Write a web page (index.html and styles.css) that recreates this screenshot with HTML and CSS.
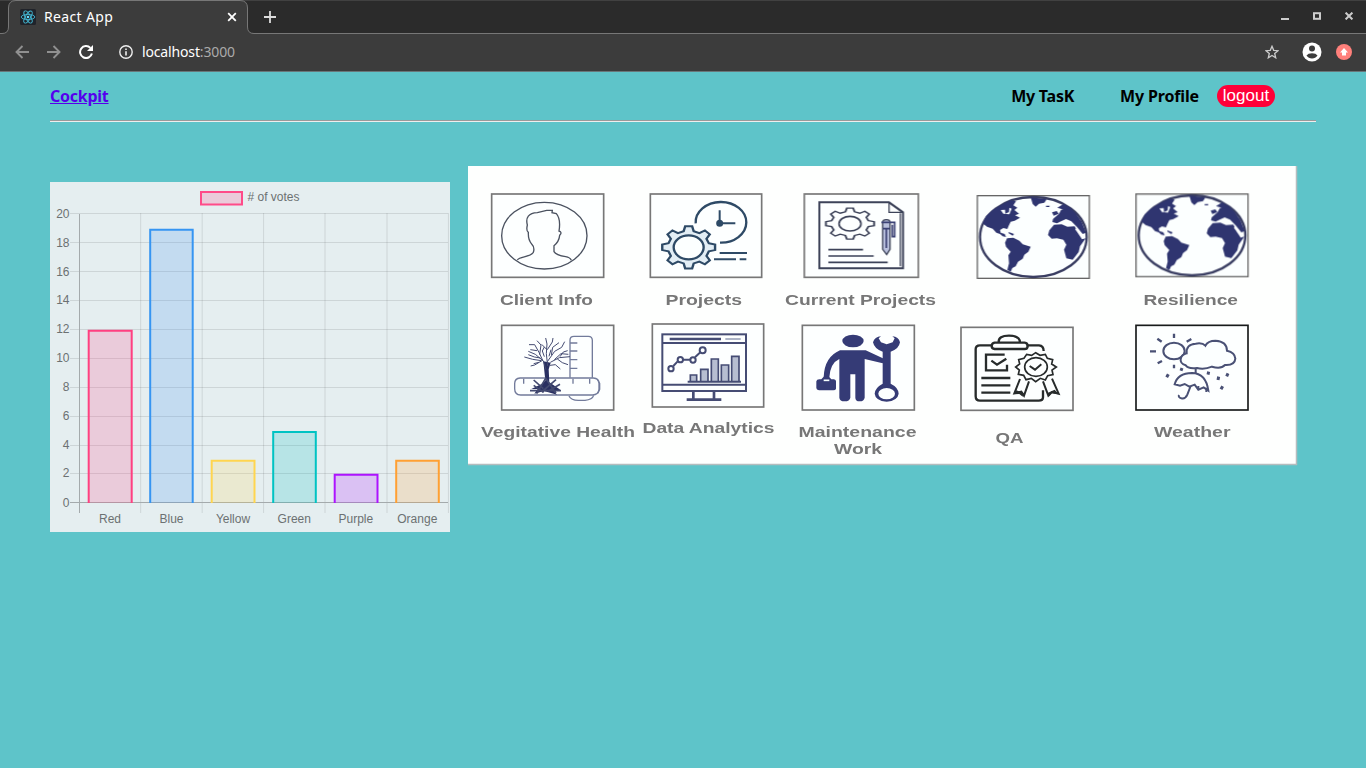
FILE: index.html
```html
<!DOCTYPE html>
<html lang="en">
<head>
<meta charset="utf-8">
<title>React App</title>
<link rel="stylesheet" href="styles.css">
</head>
<body>
<header class="browser">
  <div class="tabstrip">
    <svg class="tab-shape" width="268" height="34" viewBox="0 0 268 34"><path d="M0 33.500H2Q8.500 33.500 8.500 27V8Q8.500 .5 16 .5H240Q247.500 .5 247.500 8V27Q247.500 33.500 254 33.500H268V34H0Z" fill="#3c3c3c"/><path d="M0 33.500H2Q8.500 33.500 8.500 27V8Q8.500 .5 16 .5H240Q247.500 .5 247.500 8V27Q247.500 33.500 254 33.500H268" fill="none" stroke="#777"/></svg>
    <div class="tab">
      <svg class="favicon" width="16" height="16" viewBox="0 0 16 16"><rect width="16" height="16" rx="1.500" fill="#20232a"/><g fill="none" stroke="#43b7d3" stroke-width=".9"><ellipse cx="8" cy="8" rx="6.800" ry="2.600"/><ellipse cx="8" cy="8" rx="6.800" ry="2.600" transform="rotate(60 8 8)"/><ellipse cx="8" cy="8" rx="6.800" ry="2.600" transform="rotate(120 8 8)"/></g><circle cx="8" cy="8" r="1.300" fill="#61dafb"/></svg>
      <span class="tab-title">React App</span>
      <svg class="tab-close" width="10" height="10" viewBox="0 0 10 10"><path d="M1.200 1.200L8.800 8.800M8.800 1.200L1.200 8.800" stroke="#fff" stroke-width="1.800"/></svg>
    </div>
    <svg class="new-tab" width="12" height="12" viewBox="0 0 12 12"><path d="M6 0V12M0 6H12" stroke="#ddd" stroke-width="1.800"/></svg>
    <div class="window-buttons">
      <svg width="8" height="8" viewBox="0 0 8 8"><path d="M0 7H8" stroke="#ccc" stroke-width="2"/></svg>
      <svg width="8" height="8" viewBox="0 0 8 8"><rect x="1" y="1.200" width="6" height="5.600" fill="none" stroke="#ccc" stroke-width="2"/></svg>
      <svg width="8" height="8" viewBox="0 0 8 8"><path d="M.6 .6L7.400 7.400M7.400 .6L.6 7.400" stroke="#ccc" stroke-width="2"/></svg>
    </div>
  </div>
  <div class="toolbar">
    <svg width="14" height="14" viewBox="0 0 14 14"><path d="M14 7H1.500M7.500 1L1.500 7L7.500 13" fill="none" stroke="#909090" stroke-width="1.900"/></svg>
    <svg width="14" height="14" viewBox="0 0 14 14"><path d="M0 7H12.500M6.500 1L12.500 7L6.500 13" fill="none" stroke="#909090" stroke-width="1.900"/></svg>
    <svg width="14" height="14" viewBox="0 0 14 14"><path d="M12.900 8.600A6 6 0 1 1 11.400 2.900" fill="none" stroke="#fff" stroke-width="2"/><path d="M14 0V6H8Z" fill="#fff"/></svg>
    <svg class="info" width="14" height="14" viewBox="0 0 14 14"><circle cx="7" cy="7" r="6.200" fill="none" stroke="#eee" stroke-width="1.400"/><path d="M7 6.200V10.500M7 3.500V5" stroke="#eee" stroke-width="1.600"/></svg>
    <span class="url">localhost<span class="port">:3000</span></span>
    <svg class="star" width="14" height="14" viewBox="0 0 14 14"><path d="M7 1.300L8.700 5.300L13 5.700L9.700 8.500L10.700 12.800L7 10.500L3.300 12.800L4.300 8.500L1 5.700L5.300 5.300Z" fill="none" stroke="#ccc" stroke-width="1.300"/></svg>
    <svg class="avatar" width="20" height="20" viewBox="0 0 20 20"><circle cx="10" cy="10" r="9.500" fill="#fff"/><circle cx="10" cy="6.500" r="3" fill="#3c3c3c"/><path d="M4.500 13.500Q6 11.200 10 11.200T15.500 13.500Q13.500 16.500 10 16.500T4.500 13.500Z" fill="#3c3c3c"/></svg>
    <svg class="update" width="16" height="16" viewBox="0 0 16 16"><circle cx="8" cy="8" r="8" fill="#ff807b"/><path d="M8 4L12 8.500H10V11.500H6V8.500H4Z" fill="#fff"/></svg>
  </div>
</header>

<nav class="nav">
  <a class="brand" href="#">Cockpit</a>
  <span class="nav-task">My TasK</span>
  <span class="nav-profile">My Profile</span>
  <button class="logout">logout</button>
</nav>

<main class="content">
  <svg class="chart" width="400" height="350" viewBox="0 0 400 350">
    <rect x="151" y="10" width="41" height="12.500" fill="#ff4081" fill-opacity=".2" stroke="#ff4b89" stroke-width="2"/>
    <text x="197.500" y="19"># of votes</text>
    <g class="grid">
      <path d="M20 31.500H398M20 60.500H398M20 89.500H398M20 118.500H398M20 147.500H398M20 176.500H398M20 205.500H398M20 234.500H398M20 263.500H398M20 291.500H398"/>
      <path d="M90.700 31V331M152.200 31V331M213.600 31V331M275 31V331M337 31V331M398.400 31V331"/>
    </g>
    <path class="axis" d="M29.500 32V331M20 320.500H398"/>
    <g class="bars">
      <path d="M38.700 321V148.700H81.700V321" fill="#ff4081" stroke="#ff4081"/>
      <path d="M100.200 321V47.700H142.700V321" fill="#3b8ff2" stroke="#3695f2"/>
      <path d="M161.700 321V278.700H204.500V321" fill="#ffd54f" stroke="#ffd54f"/>
      <path d="M223.200 321V249.900H265.800V321" fill="#00bfbf" stroke="#00c3c3"/>
      <path d="M284.700 321V292.700H327.500V321" fill="#b010ff" stroke="#ad13ff"/>
      <path d="M346.200 321V278.700H388.800V321" fill="#ffa033" stroke="#ffa033"/>
    </g>
    <g text-anchor="end"><text x="19.500" y="36">20</text><text x="19.500" y="65">18</text><text x="19.500" y="94">16</text><text x="19.500" y="122">14</text><text x="19.500" y="151">12</text><text x="19.500" y="180">10</text><text x="19.500" y="209">8</text><text x="19.500" y="238">6</text><text x="19.500" y="267">4</text><text x="19.500" y="295">2</text><text x="19.500" y="325">0</text></g>
    <g text-anchor="middle"><text x="60" y="341">Red</text><text x="121.500" y="341">Blue</text><text x="183" y="341">Yellow</text><text x="244.300" y="341">Green</text><text x="305.800" y="341">Purple</text><text x="367.300" y="341">Orange</text></g>
  </svg>

  <svg class="modules" width="830" height="300" viewBox="0 0 830 300">
    <defs>
      <path id="gear" d="M75.700 -18.900L99 -13V13L75.700 18.900L66.900 40.200L79.200 60.800L60.800 79.200L40.200 66.900L18.900 75.700L13 99H-13L-18.900 75.700L-40.200 66.900L-60.800 79.200L-79.200 60.800L-66.900 40.200L-75.700 18.900L-99 13V-13L-75.700 -18.900L-66.900 -40.200L-79.200 -60.800L-60.800 -79.200L-40.200 -66.900L-18.900 -75.700L-13 -99H13L18.900 -75.700L40.200 -66.900L60.800 -79.200L79.200 -60.800L66.900 -40.200Z"/>
      <g id="globe">
        <rect x="622" y="107" width="336" height="248" fill="#fcffff" stroke="#666" stroke-width="4"/>
        <ellipse cx="790" cy="231" rx="160" ry="120" fill="none" stroke="#3a3e62" stroke-width="7"/>
        <g fill="#2f3570">
          <path d="M638 190L648 168L668 150L692 136L722 121L738 124L730 136L742 143L733 150L747 161L735 166L750 173L734 182L722 185L716 197L712 207L700 204L690 210L692 218L704 222L708 231L698 229L690 222L679 218L668 206L651 200Z"/>
          <path d="M711 235L730 233L748 242L758 253L782 260L775 275L763 284L758 296L744 305L737 319L727 324L722 335L712 329L717 310L715 286L722 275L708 260L705 248Z"/>
          <path d="M782 112L830 118L823 128L807 131L797 140L788 132Z"/>
          <path d="M838 211L852 194L875 193L892 200L914 199L924 220L936 238L947 235L930 259L926 276L908 299L889 295L882 269L889 254L880 239L861 235L845 236L834 225Z"/>
          <path d="M849 177L867 161L873 150L887 144L899 142L918 161L935 185L948 218L938 222L921 201L904 184L888 177L873 184L861 190L847 186Z"/>
          <path d="M846 157L860 153L866 161L851 167ZM828 137L839 137L838 141L828 141ZM716 216L732 222L728 227L716 220ZM862 143L880 132L900 143L884 150Z"/>
        </g>
        <path d="M692 150L705 149L706 161L717 156L718 143L725 146L718 163L700 161Z" fill="#fbffff"/>
        <path d="M917 207L936 230" stroke="#fff" stroke-width="4"/>
      </g>
    </defs>
    <rect width="829" height="299" fill="#fefffe"/>
    <path d="M0 298.500H829M828.500 0V299" stroke="#b5bcbe" stroke-width="1.500"/>

    <g class="art" transform="translate(-3 -6) scale(.333333)">
      <rect class="frame" x="80" y="102" width="336" height="250"/>
      <g stroke="#4b5260" stroke-width="4">
        <ellipse cx="238" cy="227" rx="128" ry="100"/>
        <path d="M157 300C165 288 194 293 205 277Q210 262 200 252Q189 240 190 217Q183 213 187 195Q178 160 217 158L245 151L262 151L261 158L274 161Q288 177 282 213Q293 217 284 226Q282 245 267 257V275Q273 286 302 290Q315 292 319 301"/>
      </g>
      <rect class="frame" x="556" y="102" width="334" height="250"/>
      <g stroke="#2e4a66" stroke-width="7">
        <path d="M692 190A76 61 0 1 1 765 248"/>
        <path d="M764 151V190H811" stroke-width="6"/><circle cx="764" cy="190" r="7" fill="#2e4a66"/>
        <g transform="translate(671 262) scale(.8 .64)" stroke-width="9"><use href="#gear" fill="#e3eef5"/></g>
        <ellipse cx="671" cy="262" rx="45" ry="36" fill="#fcffff"/>
        <path d="M764 279H846M747 298H813M824 298H844" stroke-width="6"/>
      </g>
    </g>

    <g class="art" transform="translate(302 -6) scale(.333333)">
      <rect class="frame" x="103" y="102" width="342" height="250"/>
      <g stroke="#3d4359" stroke-width="4">
        <path d="M148 127H357L399 157V325H148Z" stroke-width="6"/><path d="M357 128V157H398M391 160V319"/>
        <g transform="translate(240 191) scale(.73 .47)" stroke-width="8"><use href="#gear"/></g>
        <ellipse cx="240" cy="191" rx="33" ry="22" stroke-width="5"/>
        <path d="M175 269H279M175 288H311M175 307H353" stroke-width="5"/>
        <path d="M338 268V187Q338 179 349 179T360 187V268L350 284Z" fill="#b8bfdc"/><path d="M334 187H374V230H367V194M338 206H360M349 205V264" stroke="#3c4275" stroke-width="5"/>
      </g>
      <use href="#globe"/>
      <use href="#globe" x="476" y="-5"/>
    </g>

    <g class="art" transform="translate(-3 149) scale(.333333)">
      <rect class="frame" x="110" y="31" width="336" height="254"/>
      <g stroke="#727b9b" stroke-width="4">
        <path d="M315 188V75Q315 64 327 64H370Q382 64 382 76V188M317 84H337M317 108H337M317 134H337M317 160H337M312 243Q318 256 340 256H360Q382 254 386 241"/>
        <path d="M165 189H385Q402 190 402 205V224Q400 239 383 240H167Q149 239 149 221V206Q149 190 165 189Z"/><path d="M176 191V206M324 191V206M374 191V206M398 195L404 205V223L398 235"/>
      </g>
      <path d="M235 139L257 143L251 163L253 202L286 224L266 228L276 239L237 228L208 236L218 222L199 222L230 207L241 197Z" fill="#292f61"/>
      <g stroke="#434a70" stroke-width="3">
        <path d="M243 164L235 138L211 118L190 109M229 137L203 133L178 126M234 138L222 112L209 89L192 89M216 107L196 104M224 119L228 90L216 77M248 153L244 116L246 87L242 69M245 103L230 88M247 104L262 81L264 69M247 140L269 109L290 97L299 80M259 120L263 97L282 83M256 142L283 128L315 125M277 132L292 143L309 149M285 125L295 111L308 107M255 151L271 149L286 162M231 137L209 150L197 153"/>
        <path d="M238 125L232 108L238 96M252 124L258 104M268 134L288 116L310 118M226 129L208 126L190 119M222 142L206 146"/>
        <path d="M206 195L235 221M215 236L242 190L273 235M273 194L230 231M206 211L236 232M285 208L249 229M195 227H288" stroke-width="5"/>
      </g>
      <rect class="frame" x="562" y="27" width="334" height="249"/>
      <g stroke="#454c74" stroke-width="6">
        <rect x="592" y="58" width="251" height="170"/><path d="M594 84H842M594 209H842"/><path d="M614 72H768" stroke-width="8"/><path d="M781 72H827" stroke="#adb4c6"/>
        <path d="M625 153L638 139M653 134H675M690 127L706 112"/><circle cx="618" cy="161" r="8"/><circle cx="646" cy="134" r="8"/><circle cx="684" cy="135" r="8"/><circle cx="713" cy="106" r="9"/>
        <g fill="#b7bed1" stroke-width="5"><path d="M676 200V180H695V200M707 200V163H729V200M739 200V132H760V200M769 200V150H791V200M800 200V124H822V200"/></g><path d="M668 200H828"/>
        <path d="M685 229V250M747 229V250M665 254H769" stroke-width="8"/>
      </g>
    </g>

    <g class="art" transform="translate(312 149) scale(.333333)">
      <rect class="frame" x="67" y="31" width="336" height="254"/>
      <g fill="#353b76">
        <ellipse cx="219" cy="78" rx="32" ry="19"/>
        <path d="M180 106H257L315 133L308 145L254 132V248Q252 259 239 259T226 248V178H211V248Q209 259 194 259T178 248V132Q151 144 148 187H131Q133 126 180 106Z"/>
        <path d="M109 199Q110 193 118 193H124L131 185H147L154 193H162Q168 194 168 199V221Q167 226 160 226H117Q109 225 109 219Z"/>
        <path d="M303 64L296 70L303 82L320 88L338 82L344 70L337 64Q356 66 360 82Q357 102 332 110V206Q355 217 356 236Q353 257 320 260Q286 257 284 236Q285 218 308 206V110Q283 102 279 82Q284 66 303 64Z"/>
      </g>
      <ellipse cx="320" cy="236" rx="25" ry="17" fill="#fcffff"/><path d="M131 196H148" stroke="#f7ffff" stroke-width="5"/>
      <rect class="frame" x="543" y="37" width="336" height="249"/>
      <g stroke="#272b2b" stroke-width="7">
        <path d="M635 91H600Q587 91 587 102V244Q587 257 600 257H776Q789 257 789 247V226M740 91H777Q791 92 791 108"/>
        <path d="M656 82Q655 62 687 62T720 82M644 83H734Q743 84 743 93T734 102H644Q635 101 635 93T644 83Z"/>
        <path d="M674 119H618V166H681V149M634 137L651 149L679 131M604 189H691M604 211H691M604 233H691"/>
        <path d="M767 113L780 121L796 118L802 130L818 134L815 147L829 156L816 165L819 179L803 182L796 195L781 190L767 200L754 190L738 194L731 181L715 178L718 165L707 156L719 147L716 134L732 130L740 118L755 121Z" stroke-width="5"/><ellipse cx="768" cy="156" rx="34" ry="28" stroke-width="5"/><path d="M749 153L765 164L784 148M720 192L703 235L724 230L732 242L747 199M789 199L805 242L816 231L836 236L816 191" stroke-width="6"/><path d="M703 238L709 226L730 234L728 245L718 237ZM801 235L824 224L836 238L814 235L808 244Z" fill="#272b2b" stroke="none"/>
      </g>
    </g>

    <g class="art" transform="translate(622 149) scale(.333333)">
      <rect x="138" y="31" width="336" height="254" fill="#fdffff" stroke="#181b1b" stroke-width="5"/>
      <g stroke="#4a5175" stroke-width="6">
        <ellipse cx="252" cy="108" rx="32" ry="25"/>
        <path d="M287 151Q270 146 272 132Q275 118 290 115Q288 88 317 86Q337 82 346 92Q354 77 376 77Q411 79 411 107Q435 112 436 131Q434 152 405 150Q393 163 366 155Q342 165 321 159Q293 162 287 151Z" fill="#fcffff"/>
        <path d="M252 56V69M202 71L215 80M290 80L304 72M180 109H198M203 145L216 138M252 149V160" stroke-width="7"/>
        <path d="M254 208Q263 174 306 174Q348 175 355 227L341 217L325 224L314 209L298 215L284 207L270 212Z"/><path d="M317 162V175M302 213L292 239Q286 253 274 250Q264 247 267 240M325 213V224M349 218V231"/>
        <path d="M276 159L273 167M235 178L230 187M356 170L354 179M386 185L384 195M414 175L410 184M398 214L393 223" stroke-width="9"/>
      </g>
    </g>

    <g class="captions">
      <text x="32" y="139" textLength="93" lengthAdjust="spacingAndGlyphs">Client Info</text>
      <text x="197.500" y="139" textLength="76.500" lengthAdjust="spacingAndGlyphs">Projects</text>
      <text x="317" y="139" textLength="151" lengthAdjust="spacingAndGlyphs">Current Projects</text>
      <text x="675.500" y="139" textLength="94.500" lengthAdjust="spacingAndGlyphs">Resilience</text>
      <text x="13" y="270.500" textLength="154" lengthAdjust="spacingAndGlyphs">Vegitative Health</text>
      <text x="174.500" y="267" textLength="132" lengthAdjust="spacingAndGlyphs">Data Analytics</text>
      <text x="330.500" y="270.500" textLength="118" lengthAdjust="spacingAndGlyphs">Maintenance</text>
      <text x="366" y="288" textLength="48" lengthAdjust="spacingAndGlyphs">Work</text>
      <text x="527.500" y="277" textLength="28" lengthAdjust="spacingAndGlyphs">QA</text>
      <text x="686" y="270.500" textLength="76.500" lengthAdjust="spacingAndGlyphs">Weather</text>
    </g>
  </svg>
</main>
</body>
</html>
```

FILE: styles.css
```css
* { box-sizing: border-box; }
body {
  margin: 0;
  min-height: 768px;
  background: #5ec4c9;
  font-family: "Noto Sans", sans-serif;
  overflow: hidden;
}
svg { display: block; flex: none; }
.browser { height: 72px; color: #fff; background: #3c3c3c; border-bottom: 1px solid #69777a; }
.tabstrip {
  position: relative;
  display: flex;
  align-items: center;
  height: 34px;
  background: #2b2b2b;
  border-top: 1px solid #414141;
  border-bottom: 1px solid #777;
}
.tab-shape { position: absolute; left: 0; top: -1px; }
.tab { position: relative; display: flex; align-items: center; width: 248px; padding: 0 11px 0 20px; }
.tab-title { margin-left: 8px; font-size: 14px; letter-spacing: .35px; line-height: 20px; }
.tab-close { margin-left: auto; }
.new-tab { margin-left: 16px; }
.window-buttons { display: flex; gap: 24px; margin: 0 13px 2px auto; }
.toolbar { display: flex; align-items: center; height: 36px; padding: 0 14px 0 15px; }
.toolbar svg + svg { margin-left: 18px; }
.toolbar .info { margin-left: 26px; }
.url { margin-left: 9px; font-size: 14px; letter-spacing: -.15px; line-height: 20px; }
.port { color: #aaa; }
.star { margin-left: auto; }
.toolbar .avatar { margin-left: 23px; }
.toolbar .update { margin-left: 14px; }
.nav {
  display: flex;
  align-items: center;
  height: 50px;
  margin: 0 50px;
  padding-right: 41px;
  border-bottom: 1px solid #eee;
  box-shadow: inset 0 -1px #9a9a9a;
  font-size: 16px;
  font-weight: 700;
  letter-spacing: -.25px;
}
.nav > * { position: relative; top: -.5px; }
.brand { color: #5500ee; margin-right: auto; }
.nav-profile { margin-left: 46px; letter-spacing: -.15px; }
.logout {
  width: 58px;
  height: 22px;
  margin-left: 18px;
  padding: 0;
  border: 0;
  border-radius: 11px;
  background: #ff0038;
  color: #fff;
  font: 17px "Liberation Sans", sans-serif;
  line-height: 20px;
}
.content { display: flex; align-items: flex-start; gap: 18px; padding: 44px 50px 0; }
.chart { margin-top: 16px; background: #e5eef0; }
.chart text { font: 12px "Liberation Sans", sans-serif; fill: #6c7172; }
.grid { fill: none; stroke: #000; stroke-opacity: .1; }
.axis { fill: none; stroke: #a4aaac; }
.bars { fill-opacity: .2; stroke-width: 2; }
.art { fill: none; filter: blur(1.5px); }
.frame { fill: #fdffff; stroke: #777; stroke-width: 5; }
.captions { font: 700 15px "Liberation Sans", sans-serif; fill: #777; filter: blur(.45px); }
```
